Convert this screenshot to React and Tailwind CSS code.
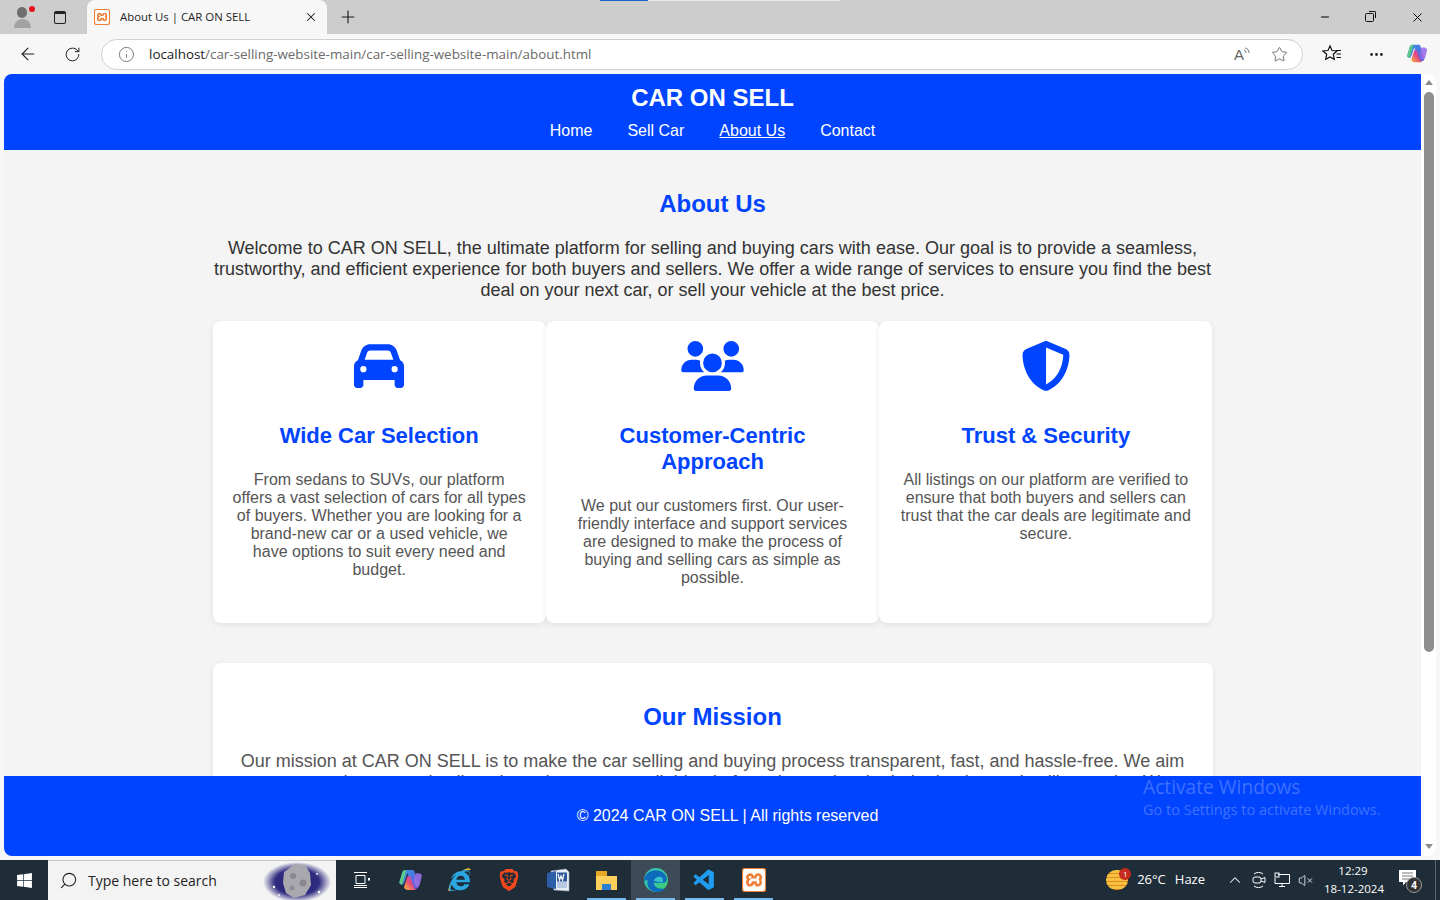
import React from 'react'
import { ArrowLeft, RotateCw, Info, Star, Plus, X, Minus, MoreHorizontal, Search, ChevronUp, VolumeX } from 'lucide-react'
import { FaWindows, FaInternetExplorer } from 'react-icons/fa'
import { FaCar, FaUsers, FaShieldHalved } from 'react-icons/fa6'
import { SiXampp, SiBrave } from 'react-icons/si'
import { VscVscode } from 'react-icons/vsc'

const cards = [
  {
    icon: <FaCar size={50} />,
    title: 'Wide Car Selection',
    text: 'From sedans to SUVs, our platform offers a vast selection of cars for all types of buyers. Whether you are looking for a brand-new car or a used vehicle, we have options to suit every need and budget.',
  },
  {
    icon: <FaUsers size={50} className="w-[63px]" />,
    title: 'Customer-Centric Approach',
    text: 'We put our customers first. Our user-friendly interface and support services are designed to make the process of buying and selling cars as simple as possible.',
  },
  {
    icon: <FaShieldHalved size={50} />,
    title: 'Trust & Security',
    text: 'All listings on our platform are verified to ensure that both buyers and sellers can trust that the car deals are legitimate and secure.',
  },
]

function XamppIcon({ size = 16 }) {
  return (
    <div className="flex items-center justify-center rounded-[2px] bg-[#ee7f37]" style={{ width: size, height: size }}>
      <SiXampp className="text-white" style={{ width: size - 2, height: size - 2 }} />
    </div>
  )
}

function CopilotIcon({ size = 22, id = 'a' }) {
  return (
    <svg width={size} height={size} viewBox="0 0 24 24">
      <defs>
        <linearGradient id={`cpA${id}`} x1="0" y1="0" x2="1" y2="1">
          <stop offset="0" stopColor="#2f9be8" />
          <stop offset="1" stopColor="#6b4fd8" />
        </linearGradient>
        <linearGradient id={`cpB${id}`} x1="0" y1="1" x2="1" y2="0">
          <stop offset="0" stopColor="#f6b73c" />
          <stop offset="0.5" stopColor="#e8487f" />
          <stop offset="1" stopColor="#8a5be0" />
        </linearGradient>
      </defs>
      <path d="M7 2h7c1 0 1.500.6 1.800 1.500L20 16c.6 2-1 4-3 4h-3L9 5 6 14c-.5 1.500-1 2-2 2-2 0-3-1.500-2.500-3L4 4.500C4.500 3 5.500 2 7 2z" fill={`url(#cpA${id})`} />
      <path d="M9 8h3l3 10c.4 1.500 1.500 2.500 3 3H9c-2 0-3.500-1.500-3-3.500z" fill={`url(#cpB${id})`} />
      <path d="M17 5h3c1.500 0 2.500 1 3 2.500l-2 8c-.6 2-2 3-4 3l-2-6z" fill="#9a6fe8" opacity="0.9" />
      <path d="M1.500 13L4 4.500C4.500 3 5.500 2 7 2h1L5 13c-.5 2-1.500 3-2 3-1 0-2-1.500-1.500-3z" fill="#58c987" />
    </svg>
  )
}

function EdgeIcon() {
  return (
    <svg width="26" height="26" viewBox="0 0 24 24">
      <defs>
        <linearGradient id="edgeA" x1="0" y1="0" x2="1" y2="1">
          <stop offset="0" stopColor="#35c1c9" />
          <stop offset="1" stopColor="#3ecf6d" />
        </linearGradient>
      </defs>
      <circle cx="12" cy="12" r="11" fill="url(#edgeA)" />
      <path d="M1 13C1 7 6 3 11.500 3 17 3 21 6 22 10.500c.5 3-2.500 4.500-5 4H10c0 3 3 5.500 7 5.500 1.500 0 3-.3 4-.9-2 2.500-5 3.900-8.500 3.900C8 23 4 19.500 4 15c0-1 .2-2 .6-2.700C3 12 1.800 12.200 1 13z" fill="#0f6cbd" />
      <path d="M10 13c.5-2.500 2.500-4 5-4s3.500 1.500 3.500 3.500c0 1-.5 1.500-1.500 1.500z" fill="#35c1c9" />
    </svg>
  )
}

function WordIcon() {
  return (
    <svg width="24" height="24" viewBox="0 0 24 24">
      <path d="M5 3l15-2 3 3v19l-15-1z" fill="#e9eef5" stroke="#9db1cc" strokeWidth="0.6" />
      <path d="M1 5l9-2v18l-9-2z" fill="#2f5ea8" />
      <rect x="11" y="4.500" width="10" height="9" fill="#2b579a" />
      <path d="M12 6l1.500 6 1.500-4 1.500 4 1.500-6" fill="none" stroke="white" strokeWidth="1.200" />
      <path d="M11 15h10M11 17h10M11 19h10" stroke="#6d8fc2" strokeWidth="0.8" />
    </svg>
  )
}

function IeIcon() {
  return (
    <div className="relative w-[25px] h-[25px]">
      <svg width="25" height="25" viewBox="0 0 25 25" className="absolute inset-0">
        <path d="M3 22C1 24 2 18 8 10 14 3 22-1 23 2" fill="none" stroke="#e9c53a" strokeWidth="1.400" />
      </svg>
      <FaInternetExplorer size={21} className="absolute left-[2px] top-[2px] text-[#2aa6e0]" />
    </div>
  )
}

function FolderIcon() {
  return (
    <div className="flex flex-col w-[21px] h-[19px]">
      <div className="h-[5px] w-[11px] bg-[#e8a825]" />
      <div className="flex-1 bg-[#fcd05a] flex items-end justify-center">
        <div className="w-[9px] h-[6px] bg-[#2d7fd3]" />
      </div>
    </div>
  )
}

function SearchOrb() {
  return (
    <svg width="70" height="40" viewBox="0 0 70 40">
      <defs>
        <radialGradient id="orbHalo">
          <stop offset="0" stopColor="#27246e" />
          <stop offset="0.65" stopColor="#2f2b80" />
          <stop offset="1" stopColor="#f3f3f3" />
        </radialGradient>
      </defs>
      <ellipse cx="35" cy="21" rx="34" ry="20" fill="url(#orbHalo)" />
      <path d="M22 11l11-8 10 1 5 8 1 12-6 10-11 3-8-5-3-10z" fill="#a9a8ae" />
      <circle cx="31" cy="15" r="3" fill="#8a8990" />
      <circle cx="41" cy="22" r="3.500" fill="#8a8990" />
      <circle cx="30" cy="27" r="2.500" fill="#8f8e96" />
      <circle cx="12" cy="26" r="1.200" fill="white" />
      <circle cx="57" cy="31" r="1.200" fill="white" />
      <circle cx="17" cy="34" r="0.900" fill="white" />
      <circle cx="55" cy="13" r="0.900" fill="white" />
    </svg>
  )
}

function TaskIcon({ children, active, running }) {
  return (
    <div className={`relative flex items-center justify-center w-[49px] h-full ${active ? 'bg-[#3d4b58]' : ''}`}>
      {children}
      {running && <div className="absolute bottom-0 left-[5px] right-[5px] h-[2px] bg-[#76b9ed]" />}
    </div>
  )
}

function BrowserChrome() {
  return (
    <div className="shrink-0 font-['Open_Sans',sans-serif]">
      {/* tab strip */}
      <div className="relative flex h-[34px] bg-[#cdcdcd] text-[#1f1f1f]">
        <div className="absolute top-0 left-[600px] w-[48px] h-[1px] bg-[#1668c4]" />
        <div className="absolute top-0 left-[648px] w-[192px] h-[1px] bg-[#ececec]" />
        <div className="w-[44px] flex items-center justify-center">
          <div className="relative w-[18px] h-[24px] flex flex-col items-center">
            <div className="w-[10px] h-[11px] rounded-full bg-[#6f6f6f] mt-[2px]" />
            <div className="w-[17px] h-[9px] rounded-t-full bg-[#a2a2a2] mt-[1px]" />
            <div className="absolute top-[1px] right-[-4px] w-[6px] h-[6px] rounded-full bg-[#e3101c]" />
          </div>
        </div>
        <div className="w-[32px] flex items-center justify-center">
          <div className="w-[12px] h-[13px] rounded-[2px] border border-[#222] border-t-[3px]" />
        </div>
        <div className="w-[11px]" />
        <div className="w-[240px] h-[34px] rounded-t-[8px] bg-[#f7f7f7] flex items-center pl-[7px] pr-[9px]">
          <XamppIcon />
          <span className="ml-[10px] text-[11.400px] flex-1 whitespace-nowrap">About Us | CAR ON SELL</span>
          <X size={14} strokeWidth={1.8} />
        </div>
        <div className="w-[42px] flex items-center justify-center">
          <Plus size={20} strokeWidth={1.4} />
        </div>
        <div className="ml-auto flex items-center text-black">
          <div className="w-[46px] flex justify-center"><Minus size={12} strokeWidth={2} /></div>
          <div className="w-[46px] flex justify-center pr-[3px]">
            <div className="relative w-[9px] h-[9px] border border-[#111] rounded-[1.500px]">
              <div className="absolute top-[-3px] right-[-3px] w-[7px] h-[7px] border-t border-r border-[#111] rounded-tr-[2px]" />
            </div>
          </div>
          <div className="w-[46px] flex justify-center"><X size={15} strokeWidth={1.500} /></div>
        </div>
      </div>
      {/* toolbar */}
      <div className="flex items-center h-[40px] bg-[#f7f7f7] text-[#222]">
        <div className="w-[56px] shrink-0 flex justify-center"><ArrowLeft size={20} strokeWidth={1.3} /></div>
        <div className="w-[32px] shrink-0 flex justify-center"><RotateCw size={17} strokeWidth={1.4} /></div>
        <div className="ml-[13px] w-[1202px] shrink-0 h-[31px] rounded-full bg-white border border-[#d0d0d0] flex items-center pl-[16px] pr-[14px]">
          <Info size={17} strokeWidth={1.2} className="text-[#666]" />
          <span className="ml-[14px] text-[13.400px] pt-[1px] whitespace-nowrap text-[#6a6a6a]">
            <span className="text-[#1a1a1a]">localhost</span>/car-selling-website-main/car-selling-website-main/about.html
          </span>
          <div className="ml-auto flex items-center gap-[21px] text-[#666]">
            <div className="flex items-start">
              <span className="text-[15px] leading-none font-['Liberation_Sans',sans-serif]">A</span>
              <svg width="6" height="8" viewBox="0 0 6 8" fill="none" stroke="currentColor" strokeWidth="0.9">
                <path d="M0 3a3 3 0 0 1 2 3M1 1a5 5 0 0 1 4 5" />
              </svg>
            </div>
            <Star size={17} strokeWidth={1.3} />
          </div>
        </div>
        <div className="w-[58px] shrink-0 flex justify-center">
          <svg width="20" height="20" viewBox="0 0 20 20" fill="none" stroke="#111" strokeWidth="1.200">
            <path d="M8 2l2 4.500 5 .5-3.700 3.300 1 5L8 13l-4.300 2.300 1-5L1 7l5-.5z" />
            <path d="M14 6.500h5M14.500 10h4.500M14.500 13.500h4.500" />
          </svg>
        </div>
        <div className="w-[30px] shrink-0 flex justify-center"><MoreHorizontal size={17} strokeWidth={2} /></div>
        <div className="w-[49px] shrink-0 flex pl-[15px]"><CopilotIcon /></div>
      </div>
    </div>
  )
}

function Scrollbar() {
  return (
    <div className="w-[15px] shrink-0 bg-white flex flex-col items-center">
      <div className="mt-[6px] w-0 h-0 border-x-[4px] border-x-transparent border-b-[5px] border-b-[#8a8a8a]" />
      <div className="mt-[7px] w-[10px] h-[560px] rounded-full bg-[#8e8e8e]" />
      <div className="mt-auto mb-[7px] w-0 h-0 border-x-[4px] border-x-transparent border-t-[5px] border-t-[#8a8a8a]" />
    </div>
  )
}

function Page() {
  return (
    <div className="flex-1 min-w-0 flex flex-col overflow-hidden font-['Liberation_Sans',sans-serif]">
      <header className="shrink-0 h-[76px] bg-[#0044ff] text-white text-center pt-[10px]">
        <h1 className="text-[24px] leading-[28px] font-bold">CAR ON SELL</h1>
        <nav className="mt-[10px] flex justify-center gap-[35px] text-[16px] leading-[18px]">
          <a>Home</a>
          <a>Sell Car</a>
          <a className="underline">About Us</a>
          <a>Contact</a>
        </nav>
      </header>
      <main className="flex-1 min-h-0 overflow-hidden bg-[#f4f4f4]">
        <div className="w-[1000px] mx-auto pt-[40px]">
          <h2 className="text-[24px] leading-[28px] font-bold text-[#0044ff] text-center">About Us</h2>
          <p className="mt-[20px] text-[18px] leading-[21px] text-[#333] text-center">
            Welcome to CAR ON SELL, the ultimate platform for selling and buying cars with ease. Our goal is to provide a seamless, trustworthy, and efficient experience for both buyers and sellers. We offer a wide range of services to ensure you find the best deal on your next car, or sell your vehicle at the best price.
          </p>
          <div className="mt-[20px] flex">
            {cards.map((c) => (
              <div key={c.title} className="w-1/3 h-[302px] bg-white rounded-[8px] shadow-[0_2px_6px_rgba(0,0,0,0.08)] px-[20px] pt-[20px] text-center">
                <div className="h-[50px] flex items-center justify-center text-[#0044ff]">{c.icon}</div>
                <h3 className="mt-[32px] text-[22px] leading-[26px] font-bold text-[#0044ff]">{c.title}</h3>
                <p className="mt-[22px] text-[16px] leading-[18px] text-[#555]">{c.text}</p>
              </div>
            ))}
          </div>
          <div className="mt-[40px] bg-white rounded-[8px] shadow-[0_2px_6px_rgba(0,0,0,0.08)] px-[20px] pt-[40px] pb-[40px] text-center">
            <h2 className="text-[24px] leading-[28px] font-bold text-[#0044ff]">Our Mission</h2>
            <p className="mt-[20px] text-[18px] leading-[21px] text-[#555]">
              Our mission at CAR ON SELL is to make the car selling and buying process transparent, fast, and hassle-free. We aim to connect buyers and sellers through a secure, reliable platform that makes both the buying and selling easier. We strive to keep improving every day.
            </p>
          </div>
        </div>
      </main>
      <footer className="shrink-0 h-[80px] bg-[#0044ff] text-white flex items-center justify-center pl-[30px]">
        <p className="text-[16px] leading-[18px]">© 2024 CAR ON SELL | All rights reserved</p>
      </footer>
    </div>
  )
}

function Taskbar() {
  return (
    <div className="shrink-0 h-[40px] bg-[#1e2d38] flex items-center text-white font-['Open_Sans',sans-serif]">
      <div className="w-[48px] flex justify-center"><FaWindows size={17} /></div>
      <div className="w-[288px] h-full bg-[#f3f3f3] text-[#222] border-t border-[#c8c8c8] flex items-center pl-[11px] overflow-hidden">
        <Search size={19} strokeWidth={1.4} className="-scale-x-100" />
        <span className="ml-[10px] text-[14px]">Type here to search</span>
        <div className="ml-auto mr-[4px]"><SearchOrb /></div>
      </div>
      <div className="flex items-center h-full pl-[1px]">
        <TaskIcon>
          <svg width="18" height="18" viewBox="0 0 18 18" fill="none" stroke="white" strokeWidth="1">
            <path d="M1 1.500h13M1 16.500h13M3 4.500h9v8H3zM1 14.500h13" />
            <rect x="15" y="7" width="2" height="2.500" fill="white" stroke="none" />
          </svg>
        </TaskIcon>
        <TaskIcon><CopilotIcon size={25} id="b" /></TaskIcon>
        <TaskIcon><IeIcon /></TaskIcon>
        <TaskIcon><SiBrave size={22} className="text-[#f1471d]" /></TaskIcon>
        <TaskIcon><WordIcon /></TaskIcon>
        <TaskIcon running><FolderIcon /></TaskIcon>
        <TaskIcon active running><EdgeIcon /></TaskIcon>
        <TaskIcon running><VscVscode size={25} className="text-[#1f9cf0]" /></TaskIcon>
        <TaskIcon running><XamppIcon size={24} /></TaskIcon>
      </div>
      <div className="ml-auto flex items-center h-full">
        <div className="relative w-[22px] h-[20px] rounded-full bg-[repeating-linear-gradient(#f5c33b_0px,#f5c33b_3px,#e8862e_3px,#e8862e_4px)]">
          <div className="absolute -top-[2px] -right-[3px] w-[12px] h-[12px] rounded-full bg-[#c42b1c] text-[8px] leading-[12px] text-center">1</div>
        </div>
        <span className="ml-[9px] text-[13px]">26°C</span>
        <span className="ml-[9px] text-[13px]">Haze</span>
        <ChevronUp size={18} strokeWidth={1.4} className="ml-[21px]" />
        <svg width="16" height="18" viewBox="0 0 16 18" fill="none" stroke="white" strokeWidth="1" className="ml-[7px]">
          <path d="M3 3a7 7 0 0 1 9 0M3 15a7 7 0 0 0 9 0" />
          <rect x="2" y="6" width="8" height="6" rx="2" />
          <path d="M10 8l4-1.500v5L10 10" />
        </svg>
        <svg width="16" height="16" viewBox="0 0 16 16" fill="none" stroke="white" strokeWidth="1" className="ml-[7px]">
          <path d="M4 2.500h11.500v9H1V6M8 11.500v3M5 14.500h6" />
          <rect x="1" y="1" width="4" height="4" />
        </svg>
        <VolumeX size={15} strokeWidth={1.3} className="ml-[8px]" />
        <div className="ml-[11px] w-[58px] text-center text-[11.500px] leading-[18px]">
          <div>12:29</div>
          <div className="whitespace-nowrap">18-12-2024</div>
        </div>
        <div className="relative ml-[17px] w-[26px] h-[22px]">
          <svg width="17" height="16" viewBox="0 0 17 16" className="absolute left-0 top-[1px]">
            <path d="M0 0h17v12H7l-3 3.500V12H0z" fill="white" />
            <path d="M3 3h11M3 6h11M3 9h8" stroke="#555" strokeWidth="0.8" />
          </svg>
          <div className="absolute bottom-[-2px] left-[7px] w-[16px] h-[16px] rounded-full bg-[#333] border border-[#999] text-[10px] leading-[14px] text-center font-bold">4</div>
        </div>
        <div className="w-[10px] h-full border-r border-[#5a6672] ml-[1px] mr-[4px]" />
      </div>
    </div>
  )
}

export default function App() {
  return (
    <div className="relative w-[1440px] h-[900px] overflow-hidden flex flex-col bg-[#f7f7f7]">
      <BrowserChrome />
      <div className="flex-1 min-h-0 px-[4px] pb-[4px]">
        <div className="h-full flex rounded-[8px] overflow-hidden">
          <Page />
          <Scrollbar />
        </div>
      </div>
      <Taskbar />
      {/* windows watermark */}
      <div className="absolute left-[1143px] top-[775px] text-white/25 font-['Open_Sans',sans-serif]">
        <div className="text-[19.200px] leading-[24px] whitespace-nowrap">Activate Windows</div>
        <div className="text-[14.500px] leading-[20px] mt-[1px] whitespace-nowrap">Go to Settings to activate Windows.</div>
      </div>
    </div>
  )
}
